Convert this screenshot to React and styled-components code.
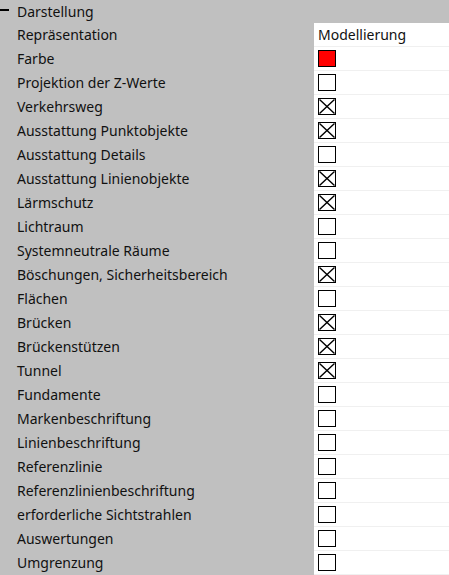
import styled, { createGlobalStyle } from "styled-components";

const GlobalStyle = createGlobalStyle`
  html, body {
    margin: 0;
    padding: 0;
    background: #c0c0c0;
  }
`;

// property grid, grey label column on the left, white value column on the right
const Grid = styled.div`
  width: 449px;
  height: 575px;
  overflow: hidden;
  background: #c0c0c0;
  font-family: "Noto Sans", "Open Sans", sans-serif;
  font-size: 14px;
  color: #111;
`;

const Header = styled.div`
  height: 23px;
  display: flex;
  align-items: center;
  padding-bottom: 1px;
  box-sizing: border-box;
`;

const Minus = styled.span`
  display: inline-block;
  width: 9px;
  height: 2px;
  background: #000;
  margin: 0 8px 2px 0;
`;

const Row = styled.div`
  display: grid;
  grid-template-columns: 314px 1fr;
  height: 24px;
`;

const Label = styled.div`
  padding: 0 0 2px 17px;
  display: flex;
  align-items: center;
  white-space: nowrap;
`;

const Value = styled.div`
  background: #fff;
  border-bottom: 1px solid #f0f0f0;
  display: flex;
  align-items: center;
  padding: 0 0 1px 4px;
  box-sizing: border-box;
`;

const Check = styled.span`
  width: 18px;
  height: 17px;
  box-sizing: border-box;
  border: 1px solid #000;
  background: ${(p) => p.$fill || "#fff"};
  display: block;
  margin-top: 1px;
  svg {
    display: block;
  }
`;

const rows = [
  ["Repräsentation", "text", "Modellierung"],
  ["Farbe", "color"],
  ["Projektion der Z-Werte", false],
  ["Verkehrsweg", true],
  ["Ausstattung Punktobjekte", true],
  ["Ausstattung Details", false],
  ["Ausstattung Linienobjekte", true],
  ["Lärmschutz", true],
  ["Lichtraum", false],
  ["Systemneutrale Räume", false],
  ["Böschungen, Sicherheitsbereich", true],
  ["Flächen", false],
  ["Brücken", true],
  ["Brückenstützen", true],
  ["Tunnel", true],
  ["Fundamente", false],
  ["Markenbeschriftung", false],
  ["Linienbeschriftung", false],
  ["Referenzlinie", false],
  ["Referenzlinienbeschriftung", false],
  ["erforderliche Sichtstrahlen", false],
  ["Auswertungen", false],
  ["Umgrenzung", false],
];

const renderValue = (kind, text) => {
  if (kind === "text") return <span>{text}</span>;
  if (kind === "color") return <Check $fill="#ff0000" />;
  return (
    <Check>
      {kind && (
        <svg width="16" height="15" viewBox="0 0 16 15">
          <path d="M0.5 0.5 L15.5 14.5 M15.5 0.5 L0.5 14.5" stroke="#000" strokeWidth="1.4" />
        </svg>
      )}
    </Check>
  );
};

export default function App() {
  return (
    <>
      <GlobalStyle />
      <Grid>
        <Header>
          <Minus />
          Darstellung
        </Header>
        {rows.map(([label, kind, text]) => (
          <Row key={label}>
            <Label>{label}</Label>
            <Value>{renderValue(kind, text)}</Value>
          </Row>
        ))}
      </Grid>
    </>
  );
}
